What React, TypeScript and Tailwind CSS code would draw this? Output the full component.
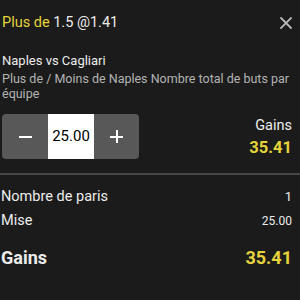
function CloseIcon() {
  return (
    <svg width="12" height="12" viewBox="0 0 12 12" fill="none">
      <path d="M1 1L11 11M11 1L1 11" stroke="#b8b8b8" strokeWidth="1.8" strokeLinecap="square" />
    </svg>
  );
}

function App() {
  const stake = "25.00";
  const gains = "35.41";

  return (
    <div
      className="w-[300px] h-[300px] bg-[#1b1b1b] text-[#ececec] overflow-hidden"
      style={{ fontFamily: "Roboto, 'Liberation Sans', sans-serif" }}
    >
      <div className="pl-[2px] pr-[8px]">
        <div className="flex items-center justify-between pt-[13px] h-[33px]">
          <div className="text-[14.5px] leading-[20px]">
            <span className="text-[#e6d33c]">Plus de</span> 1.5 @1.41
          </div>
          <button>
            <CloseIcon />
          </button>
        </div>

        <div className="mt-[19px] text-[13px] leading-[17px]">Naples vs Cagliari</div>
        <div className="mt-[2px] text-[12.5px] leading-[15px] text-[#b3b3b3]">
          Plus de / Moins de Naples Nombre total de buts par équipe
        </div>

        <div className="mt-[13px] flex items-start justify-between">
          <div className="flex h-[45px] w-[137px] rounded-[4px] overflow-hidden bg-[#585858]">
            <button className="w-[46px] flex items-center justify-center">
              <span className="block w-[13px] h-[2px] bg-white" />
            </button>
            <div className="w-[46px] bg-white text-black text-[15px] flex items-center justify-center">
              {stake}
            </div>
            <button className="w-[45px] flex items-center justify-center">
              <span className="relative block w-[13px] h-[13px]">
                <span className="absolute left-0 top-[5.5px] w-[13px] h-[2px] bg-white" />
                <span className="absolute top-0 left-[5.5px] w-[2px] h-[13px] bg-white" />
              </span>
            </button>
          </div>
          <div className="text-right pt-[3px]">
            <div className="text-[14.5px] leading-[18px]">Gains</div>
            <div className="mt-[2px] text-[16.5px] leading-[22px] font-bold text-[#e6d33c]">{gains}</div>
          </div>
        </div>
      </div>

      <div className="mt-[14px] h-[2px] bg-[#474747]" />

      <div className="pl-[1px] pr-[8px]">
        <div className="mt-[11px] flex justify-between items-center h-[22px] text-[14.5px]">
          <span>Nombre de paris</span>
          <span className="text-[13px]">1</span>
        </div>
        <div className="mt-[2px] flex justify-between items-center h-[22px] text-[14.5px]">
          <span>Mise</span>
          <span className="text-[12px]">{stake}</span>
        </div>
        <div className="mt-[12px] flex justify-between items-center h-[26px] text-[18px] font-bold">
          <span>Gains</span>
          <span className="text-[#e6d33c]">{gains}</span>
        </div>
      </div>
    </div>
  );
}

export default App;
